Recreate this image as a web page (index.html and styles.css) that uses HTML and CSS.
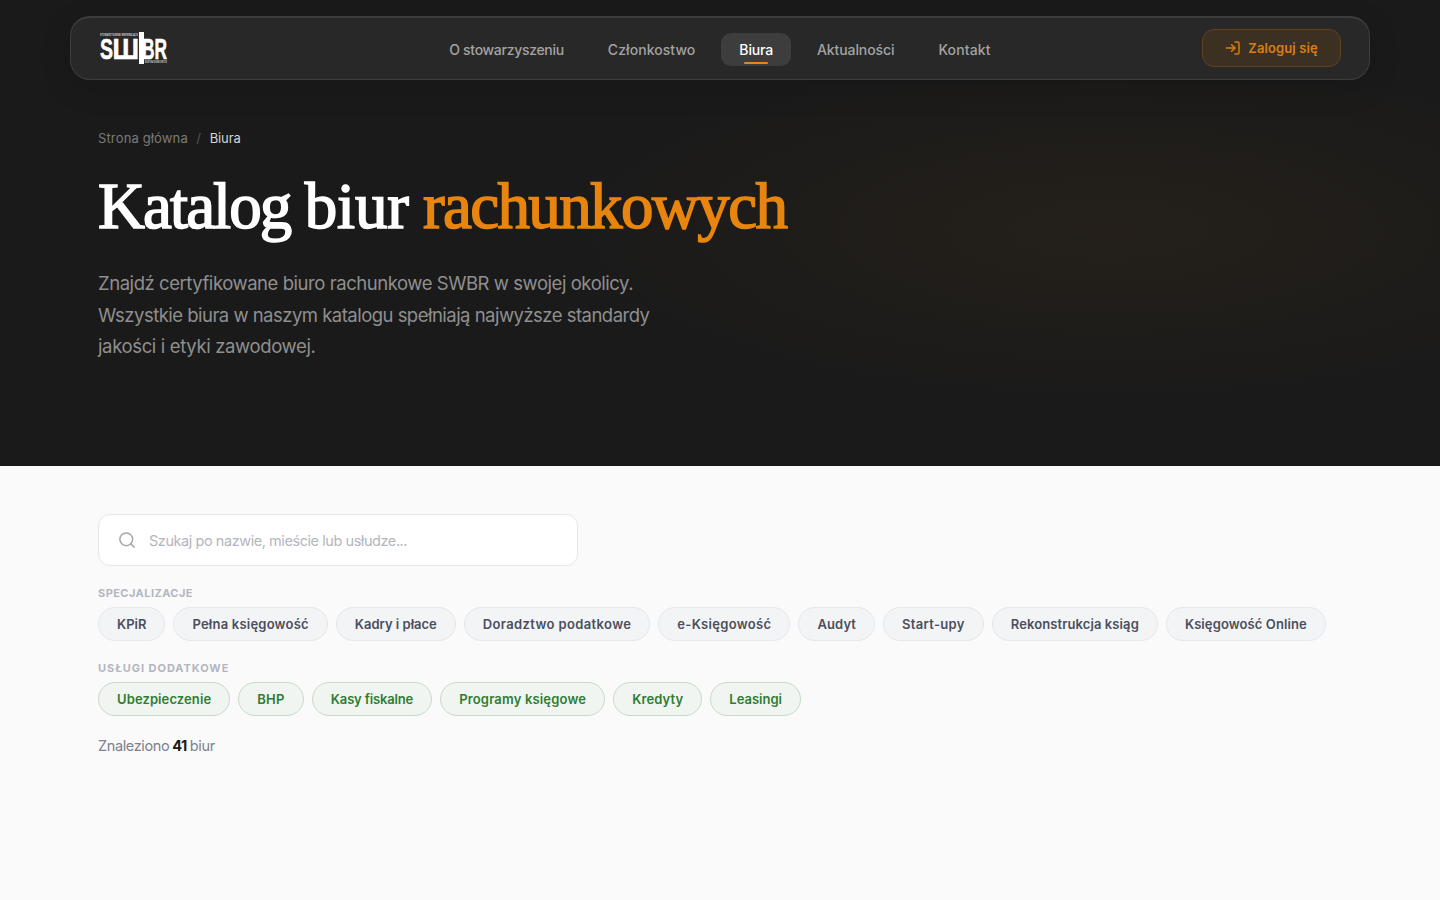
FILE: index.html
```html
<!DOCTYPE html>
<html lang="pl">
<head>
    <meta charset="UTF-8">
    <meta name="viewport" content="width=device-width, initial-scale=1.0">
    <title>Katalog biur rachunkowych - SWBR</title>
    <link rel="stylesheet" href="styles.css">
</head>
<body>
    <section class="hero">
        <header class="navbar">
            <a class="logo" href="#">
                <svg width="70" height="34" viewBox="0 0 70 34" role="img" aria-label="SWBR">
                    <text class="logo-small" x="1" y="4" textLength="38" lengthAdjust="spacingAndGlyphs">STOWARZYSZENIE WSPIERAJĄCE</text>
                    <text class="logo-text" x="1" y="27" textLength="13" lengthAdjust="spacingAndGlyphs">S</text>
                    <text class="logo-text" x="13.5" y="27" textLength="26.5" lengthAdjust="spacingAndGlyphs">Ш</text>
                    <rect x="40" y="0" width="5" height="32" fill="#fff"/>
                    <text class="logo-text" x="43" y="27" textLength="12.5" lengthAdjust="spacingAndGlyphs">B</text>
                    <text class="logo-text" x="55.5" y="27" textLength="12.5" lengthAdjust="spacingAndGlyphs">R</text>
                    <text class="logo-small" x="46" y="31" textLength="22" lengthAdjust="spacingAndGlyphs">BIUR RACHUNKOWYCH</text>
                </svg>
            </a>
            <nav class="menu">
                <a href="#" class="nav-about">O stowarzyszeniu</a>
                <a href="#" class="nav-member">Członkostwo</a>
                <a href="#" class="active">Biura</a>
                <a href="#" class="nav-news">Aktualności</a>
                <a href="#" class="nav-contact">Kontakt</a>
            </nav>
            <a class="login" href="#">
                <svg width="16" height="16" viewBox="0 0 24 24" fill="none" stroke="currentColor" stroke-width="2.2" stroke-linecap="round" stroke-linejoin="round">
                    <path d="M15 3h4a2 2 0 0 1 2 2v14a2 2 0 0 1-2 2h-4"/>
                    <polyline points="10 17 15 12 10 7"/>
                    <line x1="15" y1="12" x2="2" y2="12"/>
                </svg>
                <span>Zaloguj się</span>
            </a>
        </header>

        <div class="hero-content">
            <div class="breadcrumb">
                <a href="#">Strona główna</a>
                <span class="separator">/</span>
                <span class="current">Biura</span>
            </div>
            <h1><span class="title-main">Katalog</span> <span class="title-biur">biur</span> <span class="accent">rachunkowych</span></h1>
            <p class="lead">
                <span class="line-1">Znajdź certyfikowane biuro rachunkowe SWBR w swojej okolicy.</span><br>
                <span class="line-2">Wszystkie biura w naszym katalogu spełniają najwyższe standardy</span><br>
                <span class="line-3">jakości i etyki zawodowej.</span>
            </p>
        </div>
    </section>

    <main class="catalog">
        <div class="search">
            <svg width="18" height="18" viewBox="0 0 24 24" fill="none" stroke="currentColor" stroke-width="2" stroke-linecap="round" stroke-linejoin="round">
                <circle cx="11" cy="11" r="8.5"/>
                <line x1="21.5" y1="21.5" x2="17" y2="17"/>
            </svg>
            <input type="text" placeholder="Szukaj po nazwie, mieście lub usłudze...">
        </div>

        <h2 class="filter-label">Specjalizacje</h2>
        <div class="filters specs">
            <button>KPiR</button>
            <button>Pełna księgowość</button>
            <button>Kadry i płace</button>
            <button>Doradztwo podatkowe</button>
            <button>e-Księgowość</button>
            <button>Audyt</button>
            <button>Start-upy</button>
            <button>Rekonstrukcja ksiąg</button>
            <button>Księgowość Online</button>
        </div>

        <h2 class="filter-label label-services">Usługi dodatkowe</h2>
        <div class="filters services">
            <button>Ubezpieczenie</button>
            <button>BHP</button>
            <button>Kasy fiskalne</button>
            <button>Programy księgowe</button>
            <button>Kredyty</button>
            <button>Leasingi</button>
        </div>

        <p class="count">Znaleziono <strong>41</strong> biur</p>
    </main>
</body>
</html>
```
FILE: styles.css
```css
* {
    box-sizing: border-box;
}
body {
    margin: 0;
    font-family: Inter, sans-serif;
    background-color: #fafafa;
    color: #1a1a1a;
}
a {
    color: inherit;
    text-decoration: none;
}
.hero {
    height: 466px;
    padding-top: 16px;
    background: radial-gradient(ellipse 570px 180px at 1110px 230px, rgba(232, 133, 15, 0.05), transparent) #1a1a1a;
}
.navbar {
    display: grid;
    grid-template-columns: 1fr auto 1fr;
    align-items: center;
    width: 1300px;
    height: 64px;
    margin: 0 auto;
    padding: 0 28px;
    background-color: #282828;
    border: 1px solid #3d3d3d;
    border-top-width: 2px;
    border-radius: 20px;
    box-shadow: 0 8px 32px rgba(0, 0, 0, 0.12);
}
.logo svg {
    display: block;
    overflow: visible;
}
.logo-text {
    font: bold 30px "Liberation Sans", sans-serif;
    fill: #fff;
    stroke: #fff;
    stroke-width: 0.6px;
}
.logo-small {
    font: bold 3px "Liberation Sans", sans-serif;
    fill: #ccc;
}
.menu {
    display: flex;
    gap: 8px;
    padding-top: 2px;
}
.menu a {
    position: relative;
    padding: 8px 18px;
    border-radius: 10px;
    font-size: 14px;
    line-height: 17px;
    font-weight: 500;
    color: #a3a3a3;
    white-space: nowrap;
}
.menu .nav-about {
    letter-spacing: -0.3px;
}
.menu .nav-member {
    letter-spacing: 0.06px;
}
.menu .nav-news {
    letter-spacing: -0.1px;
}
.menu .nav-contact {
    letter-spacing: 0.15px;
}
.menu .active {
    color: #fff;
    background-color: #3d3d3d;
    letter-spacing: -0.15px;
}
.menu .active::after {
    content: "";
    position: absolute;
    left: 50%;
    bottom: 2px;
    width: 24px;
    height: 2px;
    margin-left: -12px;
    border-radius: 1px;
    background-color: #e08a1e;
}
.login {
    display: flex;
    align-items: center;
    justify-content: center;
    justify-self: end;
    gap: 7px;
    width: 139px;
    height: 38px;
    margin-bottom: 1px;
    border: 1px solid #61421f;
    border-radius: 12px;
    background-color: #3c3023;
    color: #d97f14;
    font-size: 13px;
    font-weight: 600;
}
.login span {
    letter-spacing: 0.1px;
}
.hero-content {
    width: 1244px;
    margin: 0 auto;
    padding-top: 50px;
}
.breadcrumb {
    display: flex;
    gap: 8.5px;
    font-size: 13px;
    line-height: 17px;
    letter-spacing: 0.14px;
    color: #7a7a7a;
}
.separator {
    color: #525252;
}
.current {
    color: #d4d4d4;
    letter-spacing: -0.1px;
}
h1 {
    margin: 19px 0 0;
    font-family: "Liberation Serif", serif;
    font-size: 65px;
    line-height: 80px;
    font-weight: 400;
    color: #fff;
    -webkit-text-stroke: 1.6px currentColor;
    word-spacing: -2px;
    white-space: nowrap;
}
.title-main {
    letter-spacing: -1.9px;
}
.title-biur {
    letter-spacing: -0.2px;
}
.accent {
    letter-spacing: -1.6px;
    color: #e8850f;
}
.lead {
    margin: 22px 0 0;
    font-size: 18.5px;
    line-height: 31.5px;
    color: #8f8f8f;
    white-space: nowrap;
}
.line-1 {
    letter-spacing: -0.45px;
}
.line-2 {
    letter-spacing: -0.52px;
}
.line-3 {
    letter-spacing: -0.36px;
}
.catalog {
    width: 1244px;
    margin: 0 auto;
    padding-top: 48px;
}
.search {
    display: flex;
    align-items: center;
    gap: 13px;
    width: 480px;
    height: 52px;
    padding: 0 19px;
    background-color: #fff;
    border: 1px solid #e5e7eb;
    border-radius: 12px;
    color: #a5a8ae;
}
.search input {
    flex: 1;
    padding: 0;
    border: none;
    outline: none;
    font-family: inherit;
    font-size: 14.5px;
    letter-spacing: -0.44px;
    background: none;
}
.search input::placeholder {
    color: #b3b6bd;
}
.filter-label {
    margin: 20px 0 7px;
    font-size: 11px;
    line-height: 14px;
    font-weight: 700;
    letter-spacing: 0.44px;
    text-transform: uppercase;
    color: #b3b6bf;
}
.label-services {
    letter-spacing: 0.95px;
}
.filters {
    display: flex;
    gap: 8px;
}
.filters button {
    height: 34px;
    padding: 0 18px;
    border: 1px solid #e5e7eb;
    border-radius: 17px;
    background-color: #f3f4f6;
    color: #4b4f5c;
    font-family: inherit;
    font-size: 13px;
    font-weight: 600;
    white-space: nowrap;
}
.specs button:nth-child(2) {
    letter-spacing: 0.22px;
}
.specs button:nth-child(4) {
    letter-spacing: 0.37px;
}
.specs button:nth-child(5),
.specs button:nth-child(7) {
    letter-spacing: 0.32px;
}
.specs button:nth-child(6),
.specs button:nth-child(8),
.specs button:nth-child(9) {
    letter-spacing: 0.1px;
}
.filters.services button {
    border-color: #c8dac9;
    background-color: #f1f5f1;
    color: #2e7d32;
}
.services button:nth-child(1) {
    letter-spacing: 0.1px;
}
.services button:nth-child(2) {
    letter-spacing: 0.33px;
}
.services button:nth-child(3) {
    letter-spacing: -0.15px;
}
.services button:nth-child(4) {
    letter-spacing: 0.17px;
}
.services button:nth-child(5) {
    letter-spacing: 0.12px;
}
.count {
    margin: 21px 0 0;
    font-size: 14.5px;
    line-height: 18px;
    letter-spacing: -0.38px;
    word-spacing: -0.8px;
    color: #7c818d;
}
.count strong {
    color: #1a1a1a;
}
```
